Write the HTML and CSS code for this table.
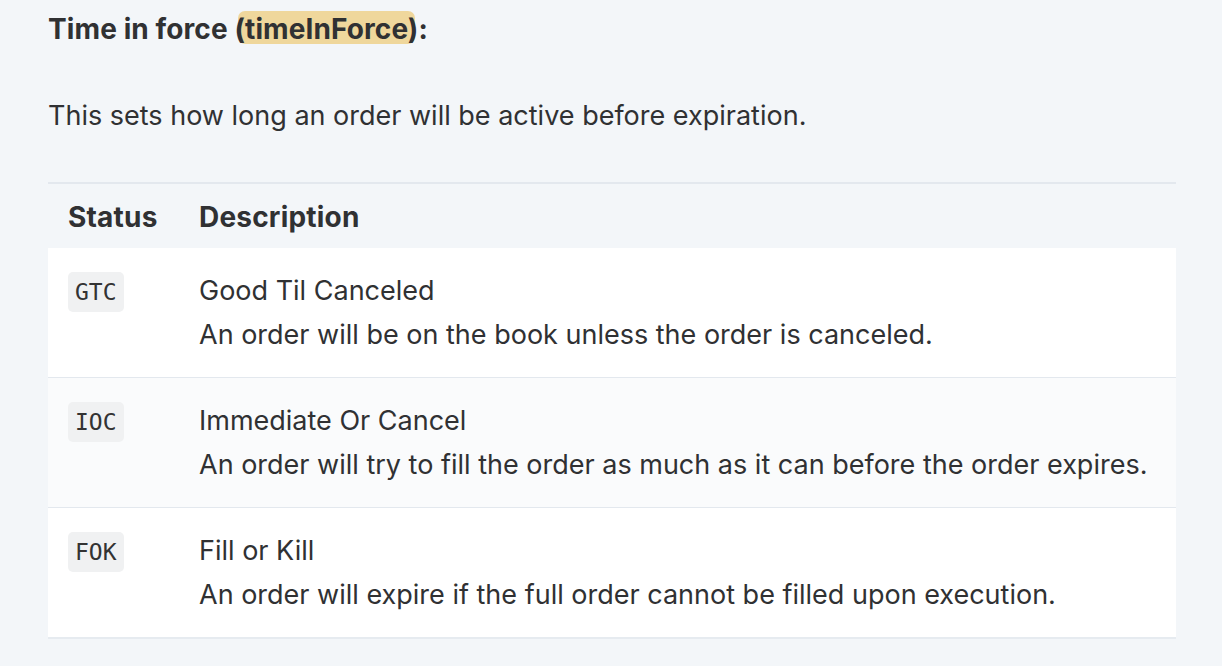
FILE: index.html
```html
<!DOCTYPE html>
<html>
<head>
<meta charset="utf-8">
<link rel="stylesheet" href="styles.css">
</head>
<body>
<main class="doc">
  <h3 class="title">Time in force <span class="hl">(timeInForce)</span>:</h3>
  <p class="lead">This sets how long an order will be active before expiration.</p>
  <table class="tbl">
    <thead>
      <tr><th class="c-status">Status</th><th>Description</th></tr>
    </thead>
    <tbody>
      <tr>
        <td class="c-status"><code class="code">GTC</code></td>
        <td>Good Til Canceled<br>An order will be on the book unless the order is canceled.</td>
      </tr>
      <tr class="alt">
        <td class="c-status"><code class="code">IOC</code></td>
        <td>Immediate Or Cancel<br>An order will try to fill the order as much as it can before the order expires.</td>
      </tr>
      <tr>
        <td class="c-status"><code class="code">FOK</code></td>
        <td>Fill or Kill<br>An order will expire if the full order cannot be filled upon execution.</td>
      </tr>
    </tbody>
  </table>
</main>
</body>
</html>
```
FILE: styles.css
```css
html, body {
  margin: 0;
  padding: 0;
  background: #f3f6f9;
}
body {
  font-family: Inter, "Noto Sans", sans-serif;
  color: #303133;
  font-size: 27px;
  line-height: 44px;
}
.doc {
  padding: 7px 46px 0 48px;
}
.title {
  margin: 0;
  font-size: 28px;
  font-weight: 700;
  line-height: 44px;
  letter-spacing: 0.1px;
}
.hl {
  position: relative;
  z-index: 0;
}
.hl::before {
  content: "";
  position: absolute;
  z-index: -1;
  left: 4px;
  right: 4px;
  top: -1px;
  bottom: 2px;
  background: #efd79c;
  border-radius: 7px;
}
.lead {
  margin: 43px 0 44px;
}
.tbl {
  width: 100%;
  border-collapse: collapse;
  border-top: 2px solid #e3e8ee;
}
.tbl th {
  text-align: left;
  font-weight: 700;
  font-size: 28px;
  letter-spacing: 0.2px;
  padding: 11px 20px 9px 20px;
}
.tbl th.c-status, .tbl td.c-status {
  width: 111px;
  padding-right: 0;
  padding-left: 20px;
}
.tbl td {
  padding: 21px 20px 20px 20px;
  vertical-align: top;
  background: #ffffff;
  border-bottom: 1px solid #e3e8ee;
}
.tbl tr.alt td {
  background: #fafbfc;
}
.tbl tbody tr:last-child td {
  border-bottom: 2px solid #e6ebf0;
}
.code {
  display: inline-block;
  font-family: "DejaVu Sans Mono", monospace;
  font-size: 23px;
  line-height: 40px;
  padding: 0 7px;
  background: #f0f1f2;
  border-radius: 5px;
  color: #333;
  vertical-align: top;
  margin-top: 3px;
}
```
